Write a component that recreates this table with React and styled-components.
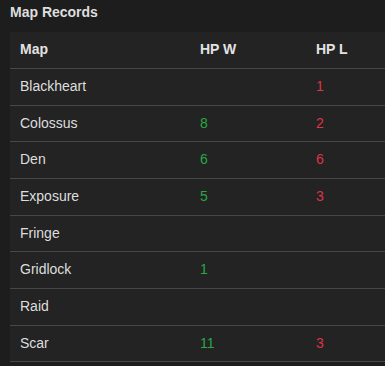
import React from "react";
import styled, { createGlobalStyle } from "styled-components";

const Global = createGlobalStyle`
  html, body { margin: 0; padding: 0; background: #1d1d1d; }
  body { font-family: Arial, "Liberation Sans", sans-serif; color: #dedede; overflow: hidden; }
`;

const Page = styled.div`
  width: 385px;
  height: 366px;
  background: #1d1d1d;
  overflow: hidden;
`;

const Title = styled.h3`
  margin: 0 0 12px;
  padding: 4px 10px 0;
  font-size: 14px;
  line-height: 16px;
  font-weight: bold;
  color: #dedede;
`;

const Table = styled.table`
  margin-left: 10px;
  width: 375px;
  border-collapse: collapse;
  background: #232323;
  table-layout: fixed;
`;

const Th = styled.th`
  text-align: left;
  font-size: 14px;
  line-height: 16px;
  font-weight: bold;
  padding: 9px 10px 11px;
  width: ${(p) => p.$w};
  border-bottom: 1px solid #474747;
  color: #e2e2e2;
`;

const Td = styled.td`
  font-size: 14px;
  line-height: 16px;
  padding: 9px 10px 10.67px;
  border-bottom: 1px solid #474747;
  color: ${(p) => (p.$tone === "win" ? "#28a745" : p.$tone === "loss" ? "#dc3545" : "#dedede")};
`;

const rows = [
  ["Blackheart", "", "1"],
  ["Colossus", "8", "2"],
  ["Den", "6", "6"],
  ["Exposure", "5", "3"],
  ["Fringe", "", ""],
  ["Gridlock", "1", ""],
  ["Raid", "", ""],
  ["Scar", "11", "3"],
];

export default function App() {
  return (
    <Page>
      <Global />
      <Title>Map Records</Title>
      <Table>
        <thead>
          <tr>
            <Th $w="160px">Map</Th>
            <Th $w="96px">HP W</Th>
            <Th>HP L</Th>
          </tr>
        </thead>
        <tbody>
          {rows.map(([m, w, l]) => (
            <tr key={m}>
              <Td>{m}</Td>
              <Td $tone="win">{w}</Td>
              <Td $tone="loss">{l}</Td>
            </tr>
          ))}
        </tbody>
      </Table>
    </Page>
  );
}
